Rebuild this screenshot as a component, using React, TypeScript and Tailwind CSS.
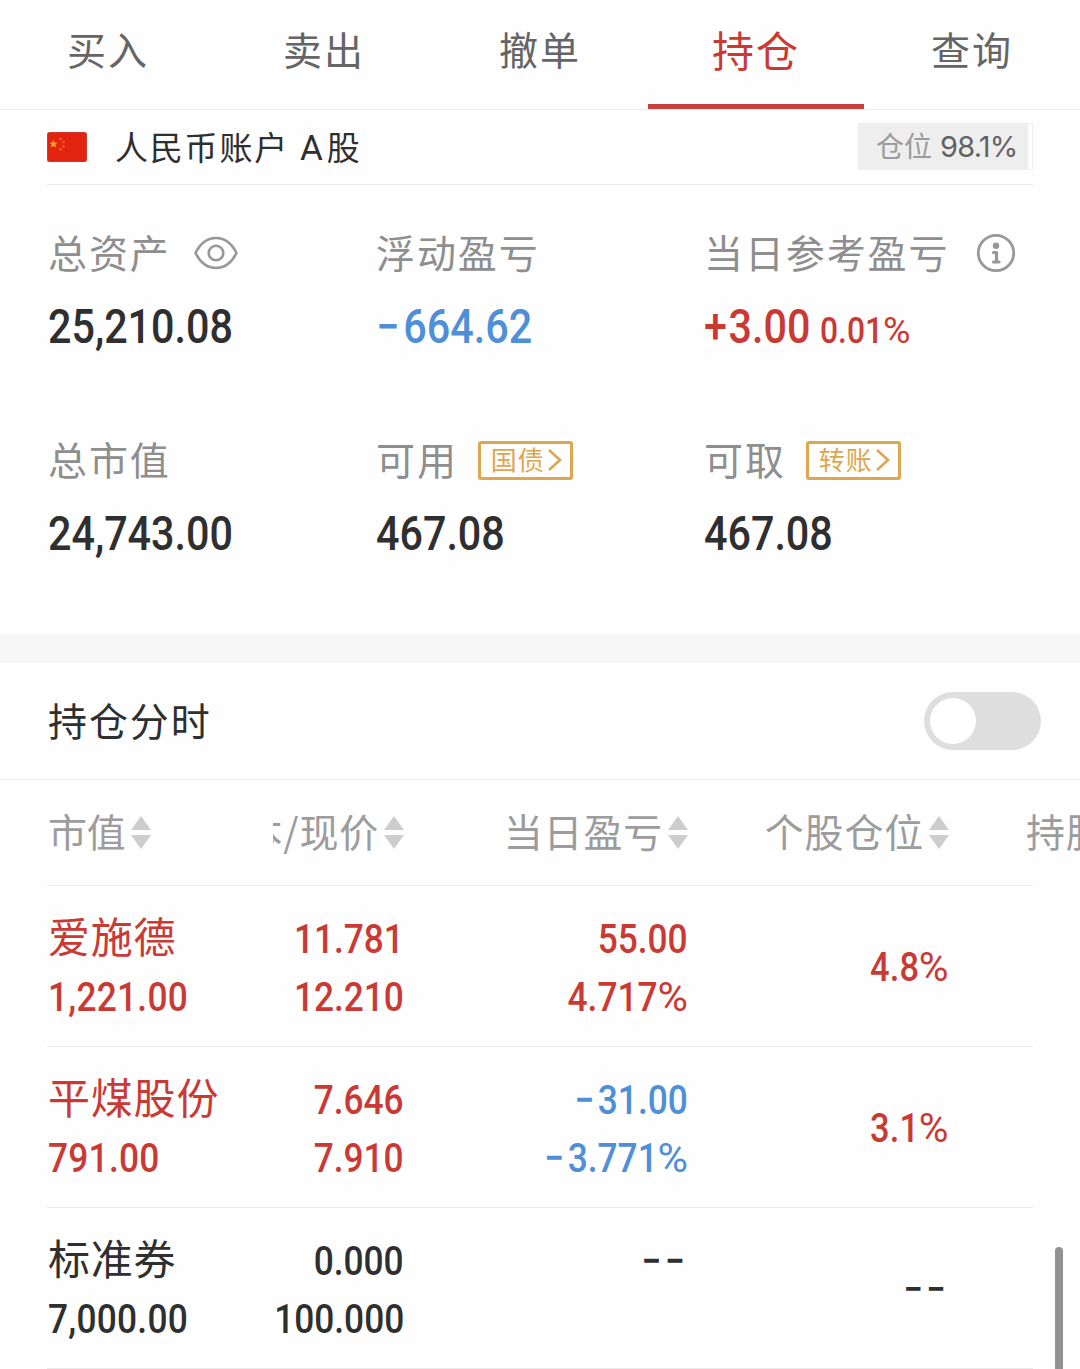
import { ReactNode, useState } from "react";
import clsx from "clsx";

const tabs = ["买入", "卖出", "撤单", "持仓", "查询"];

const columns = [
  { title: "市值", className: "w-[225px] tracking-[-0.2px]" },
  { title: "成本/现价", className: "w-[131px] justify-end overflow-hidden" },
  { title: "当日盈亏", className: "w-[284px] justify-end" },
  { title: "个股仓位", className: "w-[261px] justify-end" },
];

const holdings = [
  {
    name: "爱施德",
    value: "1,221.00",
    cost: "11.781",
    price: "12.210",
    profit: "55.00",
    profitRate: "4.717%",
    ratio: "4.8%",
    color: "text-[#c93a35]",
    profitColor: "text-[#c93a35]",
  },
  {
    name: "平煤股份",
    value: "791.00",
    cost: "7.646",
    price: "7.910",
    profit: "−31.00",
    profitRate: "−3.771%",
    ratio: "3.1%",
    color: "text-[#c93a35]",
    profitColor: "text-[#4f8fd8]",
  },
  {
    name: "标准券",
    value: "7,000.00",
    cost: "0.000",
    price: "100.000",
    profit: "−−",
    profitRate: "",
    ratio: "−−",
    color: "text-[#2f2f2f]",
    profitColor: "text-[#2f2f2f]",
  },
];

// Condensed digits, the percent sign is wider and lighter than the number
function Num({ children, className }: { children: string; className?: string }) {
  const [, sign, digits, percent] = children.match(/^([+−]*)([\d.,]*)(%?)$/) ?? [];
  return (
    <span
      className={clsx(
        "block w-fit whitespace-nowrap font-['Roboto',sans-serif] font-medium scale-x-[0.86]",
        className
      )}
    >
      {sign && <span className={sign === "+" ? "tracking-[0.04em]" : "tracking-[0.1em]"}>{sign}</span>}
      {digits}
      {percent && (
        <span className="ml-[1px] inline-block origin-right scale-x-[1.18] pl-[4px] font-normal">{percent}</span>
      )}
    </span>
  );
}

function SortIcon() {
  return (
    <svg className="ml-[5px] mt-[3px] h-[33px] w-5 shrink-0" viewBox="0 0 20 33" fill="#cdcdcd">
      <path d="M10 0L20 14H0Z" />
      <path d="M0 19H20L10 33Z" />
    </svg>
  );
}

function EyeIcon() {
  return (
    <svg className="ml-[23px] mt-[4px] h-[34px] w-[44px]" viewBox="0 0 44 34" fill="none" stroke="#98989a" strokeWidth="2.6">
      <path d="M1.5 17C6 8 13.5 2 22 2S38 8 42.5 17C38 26 30.500 32 22 32S6 26 1.500 17Z" strokeLinejoin="round" />
      <circle cx="22" cy="17" r="7.300" />
    </svg>
  );
}

function InfoIcon() {
  return (
    <svg className="ml-[27px] mt-[4px] h-[40px] w-[40px]" viewBox="0 0 40 40" fill="none" stroke="#98989a">
      <circle cx="20" cy="20" r="17.700" strokeWidth="2.800" />
      <circle cx="20" cy="12.800" r="3.200" fill="#98989a" stroke="none" />
      <path d="M17.500 19.500H20.500V29M17.500 29H23" strokeWidth="3.200" strokeLinecap="round" strokeLinejoin="round" />
    </svg>
  );
}

function LinkButton({ children }: { children: ReactNode }) {
  return (
    <button className="ml-[20px] mt-[4px] flex h-[39px] w-[95px] items-center rounded-[3px] border-3 border-[#dda650] pl-[10px] text-[26px] leading-none text-[#dda650]">
      <span className="-mt-[2px] tracking-[1px]">{children}</span>
      <svg className="ml-[2px] h-[24px] w-[15px] shrink-0" viewBox="0 0 15 24" fill="none" stroke="#dda650" strokeWidth="2.600">
        <path d="M2 2L13 12L2 22" />
      </svg>
    </button>
  );
}

function Stat({ label, extra, children }: { label: string; extra?: ReactNode; children: ReactNode }) {
  return (
    <div className="h-[207px] w-[328px]">
      <div className="flex h-[50px] items-center whitespace-nowrap text-[39px] leading-[50px] tracking-[1.900px] text-[#8e8e8f]">
        {label}
        {extra}
      </div>
      <div className="mt-[21px] flex h-[60px] items-baseline text-[48px] leading-[60px] text-[#2f2f2f]">{children}</div>
    </div>
  );
}

function Flag() {
  return (
    <svg className="h-[30px] w-10" viewBox="0 0 40 30">
      <rect width="40" height="30" rx="2.500" fill="#c8463a" />
      <rect x="0.800" y="0.800" width="38.400" height="28.400" rx="2" fill="#e2230f" />
      <path d="M6.500 7.500L7.500 10.500L10.500 10.700L8.300 12.600L9.200 15.500L6.500 14L3.800 15.500L4.700 12.600L2.500 10.700L5.500 10.500Z" fill="#fba51c" />
      <g fill="#f0661a">
        <circle cx="13.500" cy="7" r="1.300" />
        <circle cx="16.500" cy="10" r="1.300" />
        <circle cx="16.500" cy="14.500" r="1.300" />
        <circle cx="13.500" cy="17.500" r="1.300" />
      </g>
    </svg>
  );
}

export default function App() {
  const [active, setActive] = useState("持仓");
  const [chart, setChart] = useState(false);

  return (
    <div className="relative h-[1369px] w-[1080px] overflow-hidden bg-[#fefefe] font-['Noto_Sans_CJK_SC',sans-serif] text-[#2f2f2f]">
      {/* Tabs */}
      <nav className="flex h-[110px] border-b border-[#ececec]">
        {tabs.map((tab) => (
          <button
            key={tab}
            onClick={() => setActive(tab)}
            className={clsx(
              "h-[109px] w-[216px] border-b-[5px] pb-[8px] tracking-[1.900px]",
              tab === active
                ? "border-[#c8403a] text-[42px] text-[#c93a35]"
                : "border-transparent text-[39px] text-[#656565]"
            )}
          >
            {tab}
          </button>
        ))}
      </nav>

      {/* Account */}
      <div className="mx-[47px] flex h-[75px] items-center border-b border-[#ececec]">
        <Flag />
        <div className="mt-[1px] ml-[28px] flex items-baseline text-[33px] leading-none tracking-[1.800px]">
          人民币账户
          <span className="ml-[11px] mr-[2px] font-['Roboto',sans-serif] text-[35px]">A</span>股
        </div>
        <div className="-mt-[2px] ml-auto flex h-[47px] w-[175px] border border-[#eeeeee] pr-[4px]">
          <div className="flex flex-1 items-center bg-[#eeeeee] pl-[17px] text-[28px] leading-none">
            <span className="-mt-[2px] text-[#9b9b9d]">仓位</span>
            <span className="ml-[8px] font-['Inter',sans-serif] text-[29px] tracking-[-0.800px] text-[#626262]">98.1%</span>
          </div>
        </div>
      </div>

      {/* Summary */}
      <div className="flex h-[449px] flex-wrap content-start pl-12 pt-[41px]">
        <Stat label="总资产" extra={<EyeIcon />}>
          <Num className="origin-left">25,210.08</Num>
        </Stat>
        <Stat label="浮动盈亏">
          <Num className="origin-left text-[#4f8fd8]">−664.62</Num>
        </Stat>
        <Stat label="当日参考盈亏" extra={<InfoIcon />}>
          <Num className="origin-left text-[#c93a35]">+3.00</Num>
          <Num className="-ml-[8px] origin-left text-[37px] text-[#c93a35]">0.01%</Num>
        </Stat>
        <Stat label="总市值">
          <Num className="origin-left">24,743.00</Num>
        </Stat>
        <Stat label="可用" extra={<LinkButton>国债</LinkButton>}>
          <Num className="origin-left">467.08</Num>
        </Stat>
        <Stat label="可取" extra={<LinkButton>转账</LinkButton>}>
          <Num className="origin-left">467.08</Num>
        </Stat>
      </div>

      <div className="h-[29px] bg-[#f6f6f6]" />

      {/* Intraday toggle */}
      <div className="flex h-[117px] items-center justify-between border-b border-[#ececec] pl-12 pr-[39px]">
        <span className="-mt-[4px] text-[39px] leading-none tracking-[1.900px]">持仓分时</span>
        <button
          onClick={() => setChart(!chart)}
          className={clsx(
            "flex h-[58px] w-[117px] items-center rounded-full px-[6px]",
            chart ? "justify-end bg-[#c93a35]" : "bg-[#dedede]"
          )}
        >
          <span className="h-[46px] w-[46px] rounded-full bg-white" />
        </button>
      </div>

      {/* Holdings header */}
      <div className="flex h-[105px] items-center pb-[4px] pl-12 text-[39px] leading-none tracking-[0.800px] text-[#9c9c9d]">
        {columns.map((col) => (
          <div key={col.title} className={clsx("flex h-[60px] shrink-0 items-center whitespace-nowrap", col.className)}>
            {col.title}
            <SortIcon />
          </div>
        ))}
        <div className="ml-[77px] shrink-0 whitespace-nowrap">持股</div>
      </div>

      {/* Holdings */}
      <div className="mx-[47px] border-t border-[#ececec] text-[41px] leading-[58px]">
        {holdings.map((item) => (
          <div key={item.name} className={clsx("flex h-[161px] border-b border-[#ececec] pl-[1px] pt-[24px]", item.color)}>
            <div className="w-[225px]">
              <div className="h-[58px] whitespace-nowrap text-[42px] leading-[49px] tracking-[0.800px]">{item.name}</div>
              <Num className="origin-left tracking-[0.300px]">{item.value}</Num>
            </div>
            <div className="flex w-[131px] flex-col items-end">
              <Num className="origin-right">{item.cost}</Num>
              <Num className="origin-right">{item.price}</Num>
            </div>
            <div className={clsx("flex w-[284px] flex-col items-end", item.profitColor)}>
              <Num className="origin-right">{item.profit}</Num>
              <Num className="origin-right">{item.profitRate}</Num>
            </div>
            <div className="flex w-[261px] flex-col items-end pt-[29px] text-[40px]">
              <Num className="origin-right tracking-[0.300px]">{item.ratio}</Num>
            </div>
          </div>
        ))}
      </div>

      {/* Scrollbar */}
      <div className="absolute right-[17px] top-[1247px] h-[130px] w-2 rounded-full bg-[#929292]" />
    </div>
  );
}
